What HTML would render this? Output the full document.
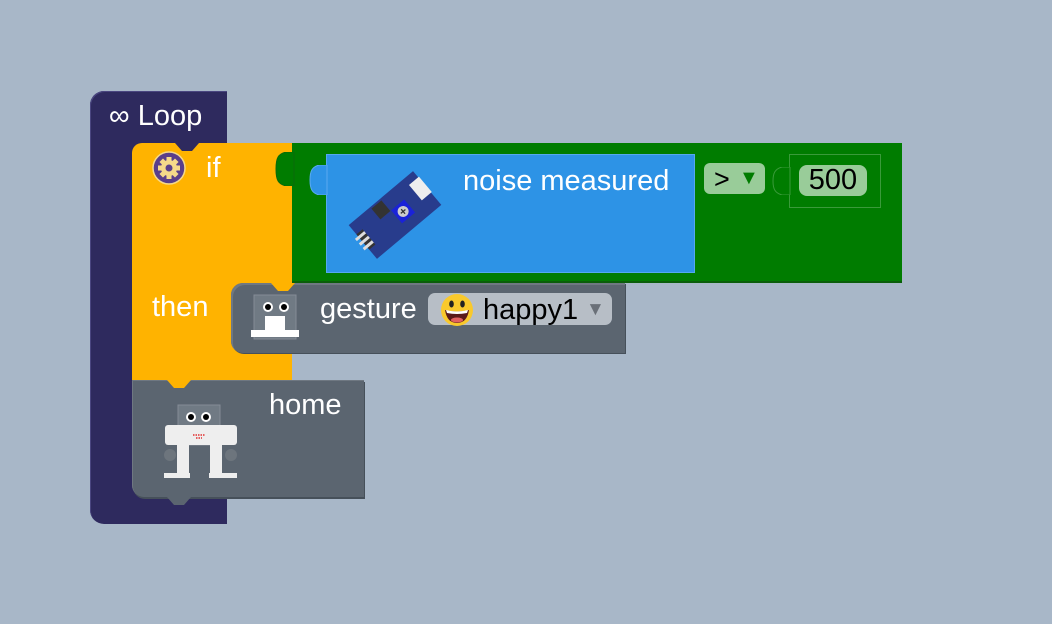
<!DOCTYPE html>
<html><head><style>
body{margin:0;width:1052px;height:624px;background:#a8b7c8;position:relative;overflow:hidden;font-family:"Liberation Sans",sans-serif}
.a{position:absolute}
.t{position:absolute;color:#fff;font-size:29px;line-height:1}
</style></head><body>
<div class="a" style="left:90px;top:91px;width:137px;height:433px;background:#2e2a5e;border-radius:14px 0 0 14px;box-shadow:inset 1px 1px 0 #4a4680"></div>
<div class="a" style="left:227px;top:143px;width:20px;height:359px;background:#a8b7c8"></div>
<div class="t" style="left:109px;top:102px;font-size:29px">∞ Loop</div>
<div class="a" style="left:132px;top:143px;width:160px;height:237px;background:#ffb300;border-radius:10px 0 0 0"></div>
<svg class="a" style="left:170px;top:143px" width="40" height="12"><path d="M5 0 L12 8 L22 8 L29 0Z" fill="#2e2a5e"/></svg>
<svg class="a" style="left:151px;top:151px" width="36" height="36"><circle cx="18" cy="17" r="16" fill="#5a3e8a" stroke="#f5d98a" stroke-width="1.5"/><g fill="#f5d98a" transform="translate(18 17)"><circle r="8"/><rect x="-2.5" y="-11" width="5" height="22"/><rect x="-11" y="-2.5" width="22" height="5"/><rect x="-2.5" y="-11" width="5" height="22" transform="rotate(45)"/><rect x="-2.5" y="-11" width="5" height="22" transform="rotate(-45)"/></g><circle cx="18" cy="17" r="3.5" fill="#5a3e8a"/></svg>
<div class="t" style="left:206px;top:154px">if</div>
<div class="t" style="left:152px;top:293px">then</div>
<div class="a" style="left:292px;top:143px;width:610px;height:140px;background:#007c00;box-shadow:inset 0 -2px 0 #0a5e0a"></div>
<svg class="a" style="left:274px;top:152px" width="22" height="34"><path d="M20 0 L20 34 L12 34 C4 32 2 28 2 17 C2 6 4 2 12 0Z" fill="#007c00" stroke="#0a6a0a"/></svg>
<div class="a" style="left:326px;top:154px;width:369px;height:119px;background:#2d93e6;border:1px solid #55a8ee;box-sizing:border-box"></div>
<svg class="a" style="left:309px;top:165px" width="20" height="30"><path d="M18 0 L18 30 L10 30 C3 28 1 24 1 15 C1 6 3 2 10 0Z" fill="#2d93e6" stroke="#5aaaf0"/></svg>
<svg class="a" style="left:345px;top:163px" width="100" height="100" viewBox="0 0 100 100">
<g transform="translate(50 52) rotate(-40)"><rect x="-42" y="-22" width="84" height="44" fill="#283c8c"/><rect x="-14" y="-20" width="13" height="14" fill="#333"/><rect x="0" y="-6" width="17" height="17" fill="#1a22d8"/><circle cx="8.5" cy="2.5" r="5.5" fill="#ccc"/><path d="M5.5 2.5h6M8.5 -0.5v6" stroke="#333" stroke-width="1.3"/><rect x="30" y="-14" width="13" height="20" fill="#eee"/><rect x="-42" y="-10" width="8" height="20" fill="#333"/><path d="M-34 -6h-12M-34 0h-12M-34 6h-12" stroke="#ddd" stroke-width="3"/></g></svg>
<div class="t" style="left:463px;top:167px">noise measured</div>
<div class="a" style="left:704px;top:163px;width:61px;height:31px;background:#99cc99;border-radius:6px"></div>
<div class="a" style="left:714px;top:164px;font-size:27px;color:#000">&gt;</div>
<div class="a" style="left:739px;top:167px;font-size:20px;color:#007c00">▼</div>
<div class="a" style="left:789px;top:154px;width:92px;height:54px;border:1px solid #3a9a3a;box-sizing:border-box"></div>
<svg class="a" style="left:772px;top:167px" width="20" height="28"><path d="M18 0 L18 28 L10 28 C3 26 1 22 1 14 C1 6 3 2 10 0Z" fill="#007c00" stroke="#3a9a3a"/></svg>
<div class="a" style="left:799px;top:165px;width:68px;height:31px;background:#99cc99;border-radius:8px;font-size:29px;color:#000;text-align:center;line-height:31px">500</div>
<div class="a" style="left:231px;top:283px;width:394px;height:70px;background:#5b6570;border-radius:12px 0 0 12px;box-shadow:inset 2px 2px 0 #6f7882,1px 1px 0 #46505a"></div>
<svg class="a" style="left:266px;top:283px" width="40" height="12"><path d="M5 0 L12 8 L22 8 L29 0Z" fill="#ffb300"/></svg>
<svg class="a" style="left:250px;top:294px" width="50" height="48"><rect x="4" y="1" width="42" height="44" fill="#707a84" stroke="#848c96"/><circle cx="18" cy="13" r="5" fill="#fff"/><circle cx="18" cy="13" r="3" fill="#000"/><circle cx="34" cy="13" r="5" fill="#fff"/><circle cx="34" cy="13" r="3" fill="#000"/><rect x="15" y="22" width="20" height="16" fill="#fff"/><rect x="1" y="36" width="48" height="7" fill="#fff"/></svg>
<div class="t" style="left:320px;top:295px">gesture</div>
<div class="a" style="left:428px;top:293px;width:184px;height:32px;background:#b7bec6;border-radius:7px"></div>
<svg class="a" style="left:440px;top:293px" width="34" height="34"><circle cx="17" cy="17" r="16" fill="#f9c92c"/><ellipse cx="11.5" cy="11" rx="2.3" ry="3.5" fill="#222"/><ellipse cx="22.5" cy="11" rx="2.3" ry="3.5" fill="#222"/><path d="M5 17 Q17 20 29 17 Q27 30 17 30 Q7 30 5 17Z" fill="#5a1a1a"/><path d="M6 17 Q17 20 28 17 L27 20 Q17 22 7 20Z" fill="#fff"/><ellipse cx="17" cy="27" rx="6" ry="2.5" fill="#e2605f"/></svg>
<div class="a" style="left:483px;top:294px;font-size:29px;color:#000">happy1</div>
<div class="a" style="left:586px;top:299px;font-size:19px;color:#6a7078">▼</div>
<div class="a" style="left:132px;top:380px;width:232px;height:117px;background:#5b6570;border-radius:0 0 0 12px;box-shadow:inset 1px 1px 0 #6f7882,1px 2px 0 #46505a"></div>
<svg class="a" style="left:162px;top:380px" width="40" height="12"><path d="M5 0 L12 8 L22 8 L29 0Z" fill="#ffb300"/></svg>
<svg class="a" style="left:162px;top:497px" width="40" height="10"><path d="M5 0 L12 8 L22 8 L29 0Z" fill="#5b6570"/></svg>
<svg class="a" style="left:160px;top:403px" width="82" height="78"><rect x="18" y="2" width="42" height="40" fill="#707a84" stroke="#848c96"/><circle cx="31" cy="14" r="5" fill="#fff"/><circle cx="31" cy="14" r="3" fill="#000"/><circle cx="46" cy="14" r="5" fill="#fff"/><circle cx="46" cy="14" r="3" fill="#000"/><rect x="5" y="22" width="72" height="20" rx="3" fill="#eee"/><rect x="28" y="22" width="24" height="12" fill="#eee"/><circle cx="10" cy="52" r="6" fill="#6d757d"/><circle cx="71" cy="52" r="6" fill="#6d757d"/><rect x="17" y="42" width="12" height="30" fill="#eee"/><rect x="50" y="42" width="12" height="30" fill="#eee"/><rect x="4" y="70" width="26" height="5" fill="#eee"/><rect x="49" y="70" width="28" height="5" fill="#eee"/><path d="M33 32h12M36 35h6" stroke="#e03030" stroke-width="1.5" stroke-dasharray="1.5 1"/></svg>
<div class="t" style="left:269px;top:391px">home</div>
</body></html>
